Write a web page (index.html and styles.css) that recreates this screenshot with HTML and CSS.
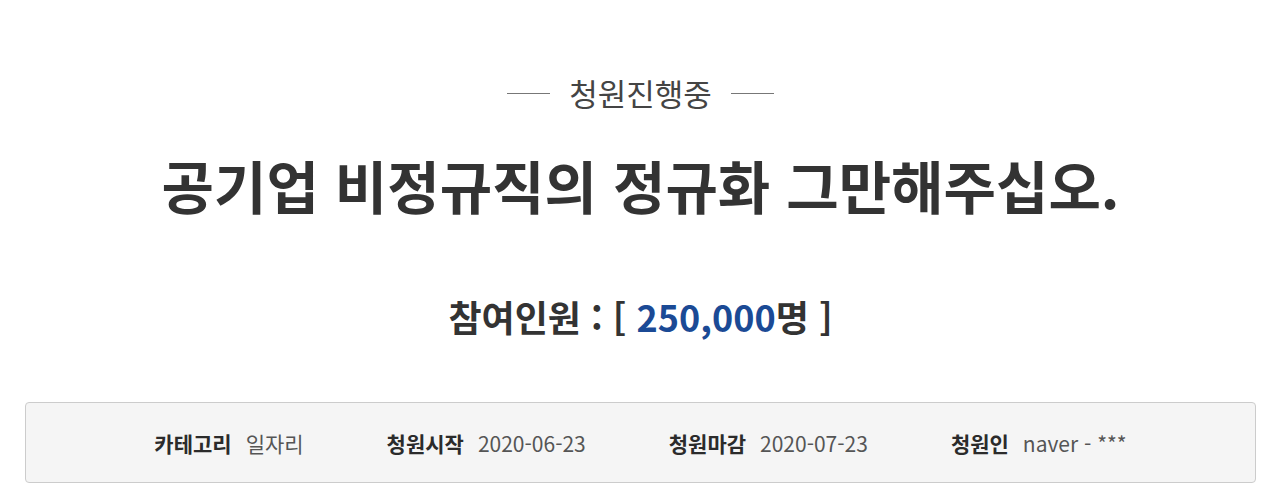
FILE: index.html
```html
<!DOCTYPE html>
<html lang="ko">
<head>
<meta charset="utf-8">
<link rel="stylesheet" href="styles.css">
</head>
<body>
<div class="petition">
  <div class="status">
    <span class="line"></span>
    <span class="status-text">청원진행중</span>
    <span class="line"></span>
  </div>
  <h1 class="title">공기업 비정규직의 정규화 그만해주십오.</h1>
  <h2 class="count">참여인원 : [ <span class="num">250,000</span>명 ]</h2>
  <ul class="info">
    <li><strong>카테고리</strong><span>일자리</span></li>
    <li><strong>청원시작</strong><span>2020-06-23</span></li>
    <li><strong>청원마감</strong><span>2020-07-23</span></li>
    <li><strong>청원인</strong><span>naver - ***</span></li>
  </ul>
</div>
</body>
</html>
```
FILE: styles.css
```css
html, body {
  margin: 0;
  padding: 0;
  background: #fff;
}
body {
  font-family: "Noto Sans CJK KR", "Noto Sans", sans-serif;
  color: #333;
}
.petition {
  padding: 72px 24px 0 25px;
}
.status {
  display: flex;
  justify-content: center;
  align-items: center;
  gap: 19px;
  height: 42px;
}
.line {
  display: block;
  width: 43px;
  height: 1px;
  background: #777;
}
.status-text {
  font-size: 31px;
  color: #444;
  line-height: 42px;
}
.title {
  margin: 40px 0 0;
  text-align: center;
  font-size: 57px;
  font-weight: 700;
  line-height: 60px;
  color: #333;
}
.count {
  margin: 80px 0 0;
  text-align: center;
  font-size: 36px;
  font-weight: 700;
  line-height: 44px;
  color: #333;
}
.num {
  color: #1b4a95;
}
.info {
  margin: 64px 0 0;
  padding: 0;
  list-style: none;
  display: flex;
  justify-content: center;
  gap: 83px;
  height: 79px;
  align-items: center;
  background: #f5f5f5;
  border: 1px solid #ccc;
  border-radius: 4px;
}
.info li {
  display: flex;
  gap: 14px;
  align-items: center;
}
.info strong {
  font-size: 21px;
  font-weight: 700;
  color: #2b2b2b;
}
.info span {
  font-size: 21px;
  color: #555;
  font-weight: 400;
}
```
